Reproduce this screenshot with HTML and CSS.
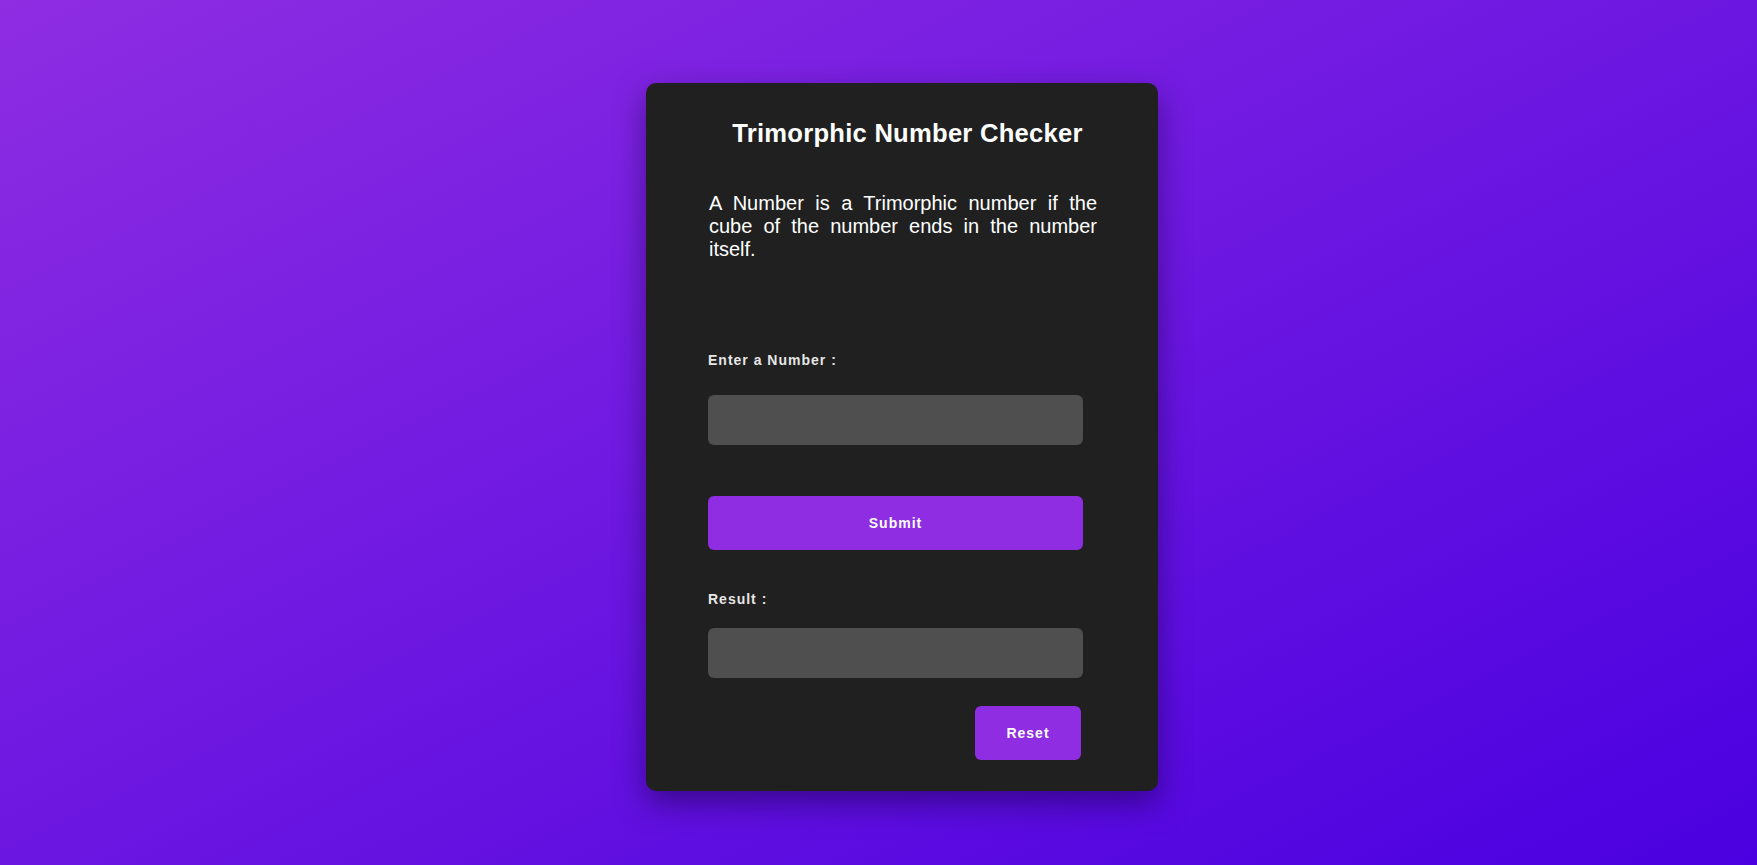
FILE: index.html
```html
<!DOCTYPE html>
<html lang="en">
<head>
<meta charset="utf-8">
<title>Trimorphic Number Checker</title>
<link rel="stylesheet" href="styles.css">
</head>
<body>
<div class="card">
  <h1 class="title">Trimorphic Number Checker</h1>
  <p class="desc">A Number is a Trimorphic number if the cube of the number ends in the number itself.</p>
  <label class="label label-first" for="num">Enter a Number :</label>
  <input class="field field-first" id="num" type="text">
  <button class="btn btn-submit" type="button">Submit</button>
  <label class="label label-result" for="res">Result :</label>
  <input class="field field-result" id="res" type="text" readonly>
  <div class="actions">
    <button class="btn btn-reset" type="button">Reset</button>
  </div>
</div>
</body>
</html>
```
FILE: styles.css
```css
html, body {
  margin: 0;
  padding: 0;
}
body {
  min-height: 865px;
  background: linear-gradient(to bottom right, #8e2de2, #4a00e0);
  font-family: "Liberation Sans", Arial, sans-serif;
  display: flex;
  justify-content: center;
  align-items: flex-start;
  box-sizing: border-box;
  padding-top: 83px;
}
.card {
  width: 512px;
  box-sizing: border-box;
  margin-left: 47px;
  padding: 36px 61px 31px 62px;
  background: #202020;
  border-radius: 10px;
  box-shadow: 0 12px 30px rgba(20, 0, 60, 0.5);
  display: flex;
  flex-direction: column;
}
.title {
  margin: 0;
  padding-left: 10px;
  font-size: 25.6px;
  line-height: 29px;
  font-weight: 700;
  letter-spacing: 0.25px;
  color: #ffffff;
  text-align: center;
}
.desc {
  margin: 44px 0 0;
  padding-left: 1px;
  font-size: 20px;
  line-height: 23px;
  color: #ffffff;
  text-align: justify;
}
.label {
  display: block;
  font-size: 14px;
  line-height: 16px;
  font-weight: 700;
  letter-spacing: 1px;
  color: #e6e6e6;
}
.label-first {
  margin-top: 91px;
}
.label-result {
  margin-top: 41px;
}
.field {
  display: block;
  width: 375px;
  height: 50px;
  box-sizing: border-box;
  border: none;
  outline: none;
  border-radius: 6px;
  background: #4f4f4f;
  color: #ffffff;
  font-family: "Liberation Sans", Arial, sans-serif;
  font-size: 16px;
  padding: 0 12px;
}
.field-first {
  margin-top: 27px;
}
.field-result {
  margin-top: 21px;
}
.btn {
  border: none;
  border-radius: 6px;
  background: #8e2de2;
  color: #ffffff;
  font-family: "Liberation Sans", Arial, sans-serif;
  font-size: 14px;
  font-weight: 700;
  letter-spacing: 1px;
  height: 54px;
  padding: 0;
  cursor: pointer;
}
.btn-submit {
  width: 375px;
  margin-top: 51px;
}
.actions {
  display: flex;
  justify-content: flex-end;
  margin-top: 28px;
  padding-right: 16px;
}
.btn-reset {
  width: 106px;
}
```
